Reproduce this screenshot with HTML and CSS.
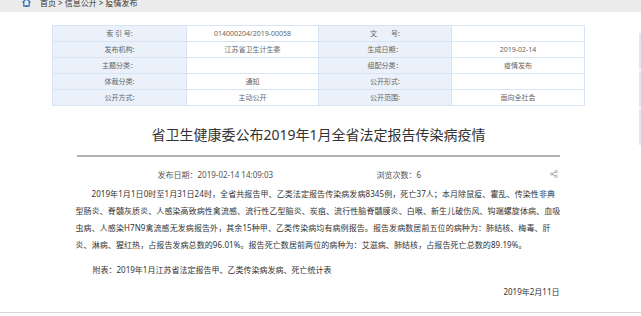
FILE: index.html
```html
<!DOCTYPE html>
<html lang="zh-CN">
    <head>
        <meta charset="UTF-8">
        <meta name="viewport" content="width=device-width, initial-scale=1.0">
        <title>疫情发布</title>
        <link rel="stylesheet" href="styles.css">
    </head>
    <body>
        <div class="topbar">
            <div class="crumbs">
                <svg class="home-icon" width="9" height="9" viewBox="0 0 9 9">
                    <path d="M0.5 4.5 L4.5 0.8 L8.5 4.5 M1.8 3.6 V8.2 H7.2 V3.6" fill="none" stroke="#2f6fbf" stroke-width="1.2"/>
                    <path d="M3.2 8.2 H5.8" stroke="#2f6fbf" stroke-width="1.6"/>
                </svg>
                <span>首页 &gt; 信息公开 &gt; 疫情发布</span>
            </div>
        </div>

        <div class="page">
            <table class="info-table">
                <tr>
                    <td class="label">索 引 号:</td>
                    <td>014000204/2019-00058</td>
                    <td class="label">文　　号:</td>
                    <td></td>
                </tr>
                <tr>
                    <td class="label">发布机构:</td>
                    <td>江苏省卫生计生委</td>
                    <td class="label">生成日期：</td>
                    <td>2019-02-14</td>
                </tr>
                <tr>
                    <td class="label">主题分类：</td>
                    <td></td>
                    <td class="label">组配分类：</td>
                    <td>疫情发布</td>
                </tr>
                <tr>
                    <td class="label">体裁分类:</td>
                    <td>通知</td>
                    <td class="label">公开形式:</td>
                    <td></td>
                </tr>
                <tr>
                    <td class="label">公开方式:</td>
                    <td>主动公开</td>
                    <td class="label">公开范围:</td>
                    <td>面向全社会</td>
                </tr>
            </table>

            <h1 class="article-title">省卫生健康委公布2019年1月全省法定报告传染病疫情</h1>

            <div class="article">
                <div class="meta">
                    <span class="meta-date">发布日期：2019-02-14 14:09:03</span>
                    <span class="meta-views">浏览次数：6</span>
                    <svg class="share-icon" width="8" height="8" viewBox="0 0 8 8">
                        <circle cx="6.2" cy="1.6" r="1.2" fill="none" stroke="#999" stroke-width="0.8"/>
                        <circle cx="1.8" cy="4" r="1.2" fill="none" stroke="#999" stroke-width="0.8"/>
                        <circle cx="6.2" cy="6.4" r="1.2" fill="none" stroke="#999" stroke-width="0.8"/>
                        <path d="M2.9 3.4 L5.1 2.2 M2.9 4.6 L5.1 5.8" stroke="#999" stroke-width="0.8"/>
                    </svg>
                </div>

                <p class="text indent">2019年1月1日0时至1月31日24时，全省共报告甲、乙类法定报告传染病发病8345例，死亡37人；本月除鼠疫、霍乱、传染性非典型肠炎、脊髓灰质炎、人感染高致病性禽流感、流行性乙型脑炎、炭疽、流行性脑脊髓膜炎、白喉、新生儿破伤风、钩端螺旋体病、血吸虫病、人感染H7N9禽流感无发病报告外，其余15种甲、乙类传染病均有病例报告。报告发病数居前五位的病种为：肺结核、梅毒、肝炎、淋病、猩红热，占报告发病总数的96.01%。报告死亡数居前两位的病种为：艾滋病、肺结核，占报告死亡总数的89.19%。</p>

                <p class="text attach">附表：2019年1月江苏省法定报告甲、乙类传染病发病、死亡统计表</p>

                <p class="text sign">2019年2月11日</p>
            </div>
        </div>

        <div class="bottom-line"></div>

        <div class="side-strip">
            <div class="strip-part"></div>
            <div class="strip-part"></div>
            <div class="strip-part"></div>
        </div>
    </body>
</html>
```

FILE: styles.css
```css
body {
    margin: 0;
    padding: 0;
    background-color: #fff;
    font-family: "Noto Sans", "Noto Sans CJK SC", sans-serif;
    color: #333;
}

.topbar {
    height: 12px;
    background-color: #ebebeb;
    overflow: hidden;
}

.crumbs {
    display: flex;
    align-items: center;
    gap: 9px;
    margin-top: -4px;
    padding-left: 22px;
    height: 12px;
    font-size: 8px;
    color: #333;
}

.page {
    width: 637px;
}

.info-table {
    width: 532px;
    margin: 13px auto 0;
    border-collapse: collapse;
    table-layout: fixed;
    font-size: 7px;
    color: #666;
}

.info-table td {
    height: 15px;
    padding: 0;
    border: 1px solid #d9e4f2;
    text-align: center;
    line-height: 15px;
}

.info-table td:nth-child(1) { width: 133px; }
.info-table td:nth-child(2) { width: 131px; }
.info-table td:nth-child(3) { width: 132px; }
.info-table td:nth-child(4) { width: 132px; }

.info-table .label {
    background-color: #eaf1fa;
}

.article-title {
    width: 483px;
    margin: 19px auto 0;
    padding-bottom: 10px;
    border-bottom: 2px solid #b3b3b3;
    font-size: 14px;
    line-height: 20px;
    font-weight: normal;
    text-align: center;
    color: #333;
}

.article {
    width: 486px;
    margin: 0 auto;
}

.meta {
    display: flex;
    align-items: center;
    margin-top: 11px;
    padding-left: 82px;
    height: 12px;
    font-size: 8px;
    color: #555;
}

.meta-date {
    width: 219px;
}

.share-icon {
    margin-left: auto;
    margin-right: 4px;
}

.text {
    margin: 0;
    font-size: 8px;
    line-height: 17px;
    color: #333;
}

.indent {
    margin-top: 5px;
    text-indent: 16px;
    letter-spacing: 0.08px;
}

.attach {
    margin-top: 8px;
    padding-left: 17px;
}

.sign {
    margin-top: 5px;
    text-align: right;
    padding-right: 2px;
}

.bottom-line {
    margin-top: 12px;
    border-top: 1px solid #d6d6d6;
}

.side-strip {
    position: fixed;
    top: 33px;
    right: 0;
    width: 2px;
    display: flex;
    flex-direction: column;
    gap: 2px;
}

.strip-part {
    height: 36px;
    background-color: #dfe8f4;
}
```
